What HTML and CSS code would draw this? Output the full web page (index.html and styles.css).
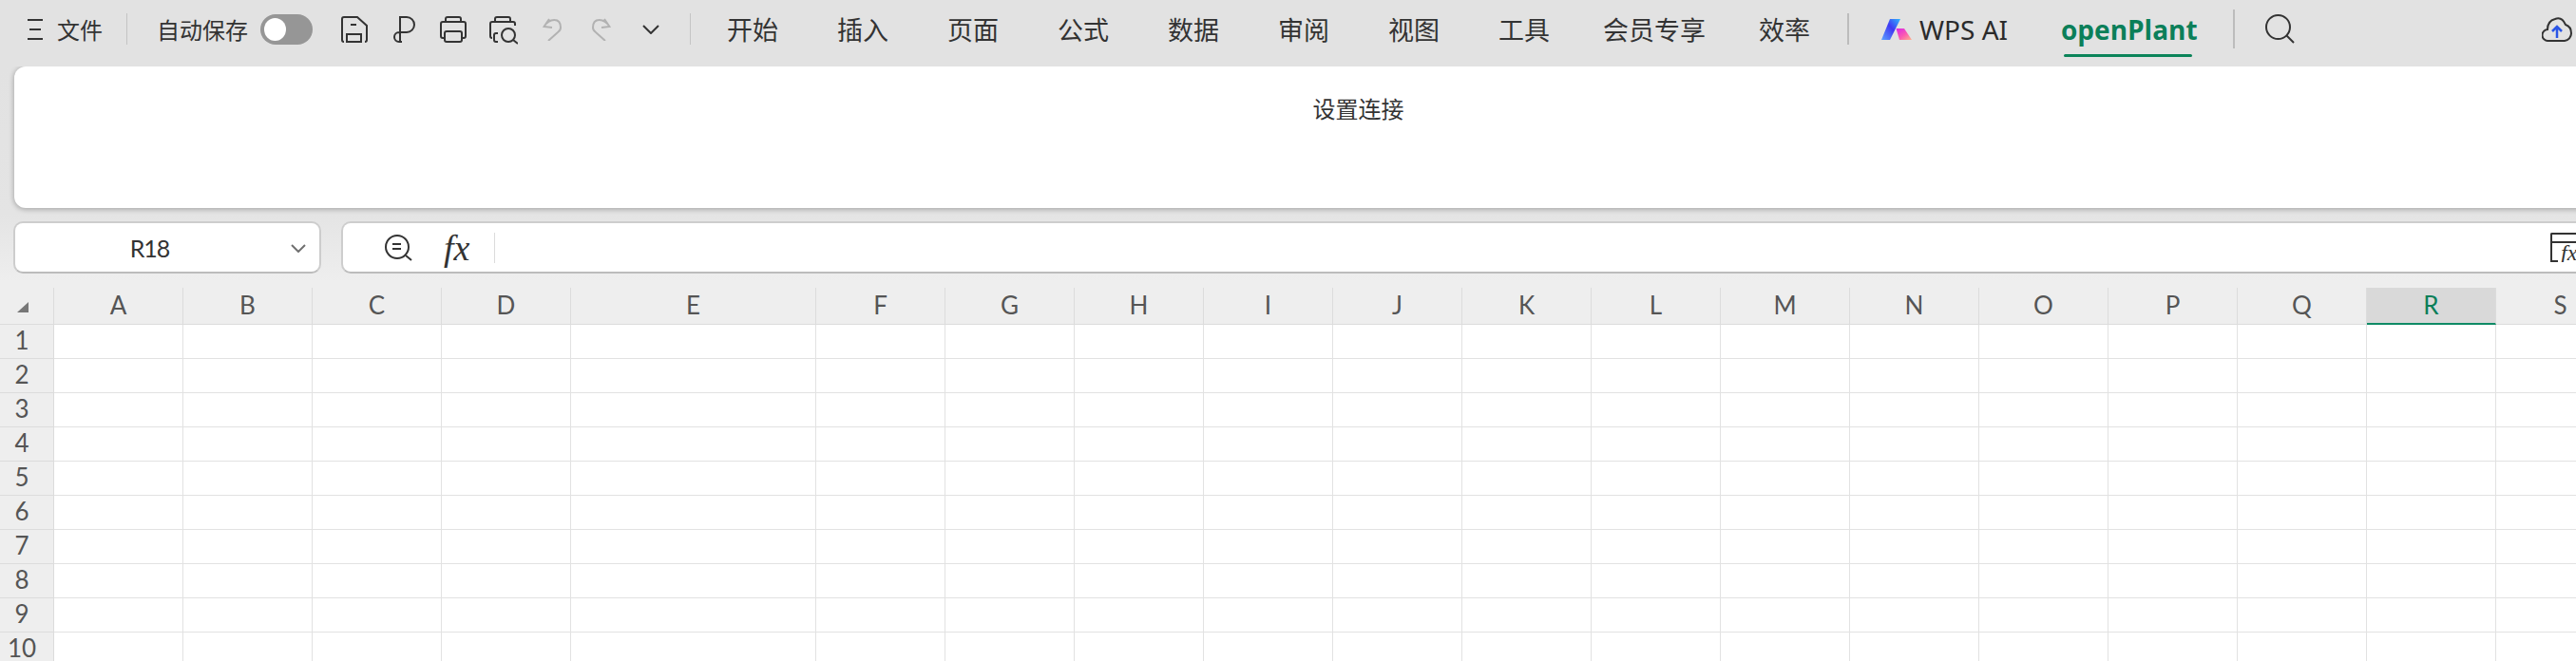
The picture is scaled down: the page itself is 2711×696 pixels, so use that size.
FILE: index.html
```html
<!DOCTYPE html>
<html lang="zh-CN">
<head>
<meta charset="utf-8">
<title>openPlant</title>
<link rel="stylesheet" href="styles.css">
</head>
<body>
<div class="app">
  <header class="menubar">
    <svg class="icon hamburger" width="18" height="22" viewBox="0 0 18 22"><path d="M1 1H17M3 11H15M1 21H17"/></svg>
    <span class="menu-text file-label">文件</span>
    <span class="divider divider-file"></span>
    <span class="menu-text autosave">自动保存</span>
    <span class="toggle"><span class="toggle-knob"></span></span>
    <svg class="icon qa-save" width="28" height="28" viewBox="0 0 28 28"><path d="M3 27Q1 27 1 25V3Q1 1 3 1H17L27 10V25Q27 27 25 27M10 9H16M6 27V19H21V27ZM6 27H21"/></svg>
    <svg class="icon qa-format" width="24" height="28" viewBox="0 0 24 28"><path d="M8 27V1H15A8 8 0 0 1 15 17H7A5 5 0 0 0 7 27H10"/></svg>
    <svg class="icon qa-print" width="28" height="28" viewBox="0 0 28 28"><path d="M6 6V3Q6 1 8 1H20Q22 1 22 3V6M5 23H3Q1 23 1 21V8Q1 6 3 6H25Q27 6 27 8V21Q27 23 25 23H23"/><rect x="5" y="16" width="18" height="11" rx="2"/></svg>
    <svg class="icon qa-preview" width="30" height="30" viewBox="0 0 30 30"><path d="M6 6V3Q6 1 8 1H20Q22 1 22 3V6M3 23Q1 23 1 21V8Q1 6 3 6H25Q27 6 27 8V10M9 18H7Q5 18 5 20V25Q5 27 7 27H9M25 25L30 29"/><circle cx="20" cy="20" r="7"/></svg>
    <svg class="icon icon-muted qa-undo" width="20" height="24" viewBox="0 0 20 24"><path d="M7 1L1.5 9L10 10M1.5 9C7 0 19 -1 19 10Q19 13 16 15L6 24"/></svg>
    <svg class="icon icon-muted qa-redo" width="20" height="24" viewBox="0 0 20 24"><path d="M13 1L18.5 9L10 10M18.5 9C13 0 1 -1 1 10Q1 13 4 15L14 24"/></svg>
    <svg class="icon qa-more" width="18" height="10" viewBox="0 0 18 10"><path d="M1 1L9 9L17 1"/></svg>
    <span class="divider divider-tabs"></span>
    <nav class="tabs">
      <span class="tab">开始</span>
      <span class="tab">插入</span>
      <span class="tab">页面</span>
      <span class="tab">公式</span>
      <span class="tab">数据</span>
      <span class="tab">审阅</span>
      <span class="tab">视图</span>
      <span class="tab">工具</span>
      <span class="tab tab-member">会员专享</span>
      <span class="tab tab-member">效率</span>
    </nav>
    <span class="divider divider-ai"></span>
    <svg class="ai-logo" width="32" height="22" viewBox="0 0 32 22">
      <defs>
        <linearGradient id="aiLeft" x1="1" y1="0" x2="0" y2="1"><stop offset="0" stop-color="#2fb8ff"/><stop offset=".45" stop-color="#4038f2"/><stop offset="1" stop-color="#5aa2ff"/></linearGradient>
        <linearGradient id="aiRight" x1="0" y1="0" x2="1" y2="1"><stop offset="0" stop-color="#d824ea"/><stop offset=".55" stop-color="#fb5cb0"/><stop offset="1" stop-color="#ffb58c"/></linearGradient>
      </defs>
      <polygon points="9,0 20,0 9,22 0,22" fill="url(#aiLeft)"/>
      <polygon points="15.500,10 24,10 32,22 19,22" fill="url(#aiRight)"/>
    </svg>
    <span class="ai-label">WPS AI</span>
    <span class="plant-tab">openPlant</span>
    <span class="divider divider-search"></span>
    <svg class="icon search" width="31" height="31" viewBox="0 0 31 31"><circle cx="13.500" cy="13.500" r="12.500"/><path d="M22.500 22.500L30 30"/></svg>
    <svg class="icon cloud" width="32" height="27" viewBox="0 0 32 27"><path d="M8 26H7A6 6 0 0 1 6 14Q6 5 14 3Q21 0 25 9Q31 11 31 18A8 8 0 0 1 24 26Z"/><path class="cloud-arrow" d="M16 23V11M11 16L16 11L21 16"/></svg>
  </header>

  <section class="ribbon"><span class="ribbon-text">设置连接</span></section>

  <section class="formula-row">
    <div class="name-box">
      <span class="name-value">R18</span>
      <svg class="name-caret" width="16" height="9" viewBox="0 0 16 9"><path d="M1 1L8 8L15 1"/></svg>
    </div>
    <div class="formula-box">
      <svg class="icon formula-zoom" width="29" height="28" viewBox="0 0 29 28"><circle cx="13" cy="13" r="12"/><path d="M8 10H17M8 15H17M22 22L28 27"/></svg>
      <span class="fx">fx</span>
      <span class="formula-sep"></span>
      <span class="formula-input"></span>
      <span class="fx-panel"><span class="fx-small">fx</span></span>
    </div>
  </section>

  <section class="sheet">
    <div class="gutter">
      <div class="corner"><span class="corner-mark"></span></div>
      <div class="row-num">1</div>
      <div class="row-num">2</div>
      <div class="row-num">3</div>
      <div class="row-num">4</div>
      <div class="row-num">5</div>
      <div class="row-num">6</div>
      <div class="row-num">7</div>
      <div class="row-num">8</div>
      <div class="row-num">9</div>
      <div class="row-num">10</div>
    </div>
    <div class="col"><div class="col-head">A</div><div class="col-body"></div></div>
    <div class="col"><div class="col-head">B</div><div class="col-body"></div></div>
    <div class="col"><div class="col-head">C</div><div class="col-body"></div></div>
    <div class="col"><div class="col-head">D</div><div class="col-body"></div></div>
    <div class="col col-wide"><div class="col-head">E</div><div class="col-body"></div></div>
    <div class="col"><div class="col-head">F</div><div class="col-body"></div></div>
    <div class="col"><div class="col-head">G</div><div class="col-body"></div></div>
    <div class="col"><div class="col-head">H</div><div class="col-body"></div></div>
    <div class="col"><div class="col-head">I</div><div class="col-body"></div></div>
    <div class="col"><div class="col-head">J</div><div class="col-body"></div></div>
    <div class="col"><div class="col-head">K</div><div class="col-body"></div></div>
    <div class="col"><div class="col-head">L</div><div class="col-body"></div></div>
    <div class="col"><div class="col-head">M</div><div class="col-body"></div></div>
    <div class="col"><div class="col-head">N</div><div class="col-body"></div></div>
    <div class="col"><div class="col-head">O</div><div class="col-body"></div></div>
    <div class="col"><div class="col-head">P</div><div class="col-body"></div></div>
    <div class="col"><div class="col-head">Q</div><div class="col-body"></div></div>
    <div class="col col-active"><div class="col-head">R</div><div class="col-body"></div></div>
    <div class="col"><div class="col-head">S</div><div class="col-body"></div></div>
  </section>
</div>
</body>
</html>
```
FILE: styles.css
```css
* { box-sizing: border-box; }
html, body { margin: 0; padding: 0; height: 100%; overflow: hidden; background: #fff; }
body { font-family: "Noto Sans CJK SC", "Noto Sans", sans-serif; color: #333; }

.app {
  width: 2711px;
  height: 696px;
  overflow: hidden;
  background: linear-gradient(#e2e2e2 0, #e2e2e2 70px, #e4e4e4 225px, #eeeeee 296px);
}

/* top bar */
.menubar {
  position: relative;
  display: flex;
  align-items: center;
  height: 70px;
  padding: 0 4px 9px 28px;
  background: #e2e2e2;
}
.icon { flex: none; fill: none; stroke: #333; stroke-width: 2; }
.icon-muted { stroke: #b2b2b2; }
.menu-text { font-size: 24px; line-height: 34px; white-space: nowrap; }
.file-label { margin-left: 14px; }
.divider { flex: none; width: 1px; height: 33px; background: #c4c4c4; }
.divider-file { margin-left: 25px; }
.autosave { margin-left: 31px; }
.toggle {
  flex: none;
  display: flex;
  align-items: center;
  width: 55px;
  height: 32px;
  margin-left: 13px;
  padding-left: 4px;
  border-radius: 16px;
  background: #969696;
}
.toggle-knob { width: 23px; height: 24px; border-radius: 50%; background: #fff; }
.qa-save { margin-left: 30px; }
.qa-format { margin-left: 26px; }
.qa-print { margin-left: 26px; }
.qa-preview { margin-left: 24px; margin-top: 2px; }
.qa-undo { margin-left: 26px; }
.qa-redo { margin-left: 32px; }
.qa-more { margin-left: 33px; }
.divider-tabs { margin-left: 32px; }
.tabs { display: flex; gap: 62px; margin-left: 38px; }
.tab { font-size: 27px; line-height: 38px; white-space: nowrap; }
.tab-member { margin-left: -6px; }
.divider-ai { width: 2px; margin-left: 39px; background: #bcbcbc; }
.ai-logo { flex: none; margin-left: 34px; }
.ai-label { margin-left: 8px; font-family: "Noto Sans", sans-serif; font-size: 28px; line-height: 38px; color: #2b2b2b; }
.plant-tab {
  position: relative;
  margin-left: 56px;
  font-family: "Open Sans", sans-serif;
  font-size: 28px;
  font-weight: 700;
  line-height: 38px;
  color: #0b7f59;
}
.plant-tab::after {
  content: "";
  position: absolute;
  left: 3px;
  right: 6px;
  top: 45px;
  height: 3px;
  border-radius: 2px;
  background: #0b8459;
}
.divider-search { width: 2px; height: 41px; margin-left: 37px; background: #bcbcbc; }
.search { margin-left: 32px; }
.cloud { margin-left: auto; }
.cloud-arrow { stroke: #2a55e6; stroke-width: 2.500; }

/* ribbon card */
.ribbon {
  display: flex;
  justify-content: center;
  width: 2829px;
  height: 149px;
  margin-left: 15px;
  padding-top: 26px;
  border-radius: 12px;
  background: #fff;
  box-shadow: 0 1px 5px 1px rgba(0, 0, 0, .24);
}
.ribbon-text { font-size: 24px; line-height: 36px; }

/* name box and formula bar */
.formula-row { display: flex; gap: 21px; width: 2900px; margin-top: 14px; padding-left: 14px; }
.name-box, .formula-box {
  display: flex;
  align-items: center;
  height: 55px;
  border: 2px solid #cdcdcd;
  border-bottom: 2px solid #bcbcbc;
  border-radius: 10px;
  background: #fff;
}
.name-box { position: relative; justify-content: center; width: 324px; padding-right: 37px; }
.name-value { font-family: Lato, sans-serif; font-size: 25px; letter-spacing: -1px; color: #333; }
.name-caret { position: absolute; right: 14px; top: 22px; fill: none; stroke: #707070; stroke-width: 2; }
.formula-box { width: 2480px; padding-left: 44px; flex: none; }
.fx { margin-left: 33px; font-family: "Liberation Serif", serif; font-size: 38px; font-style: italic; line-height: 40px; color: #333; }
.formula-sep { width: 1px; height: 32px; margin-left: 26px; background: #dcdcdc; }
.formula-input { flex: 1; }
.fx-panel {
  position: relative;
  width: 40px;
  height: 31px;
  margin-right: 113px;
  border-left: 2px solid #333;
  border-top: 2px solid #333;
  border-radius: 2px 0 0 0;
  overflow: hidden;
}
.fx-panel::before {
  content: "";
  position: absolute;
  left: 0;
  right: 0;
  top: 7px;
  height: 2px;
  background: #333;
}
.fx-panel::after {
  content: "";
  position: absolute;
  left: 0;
  bottom: 0;
  width: 6px;
  height: 2px;
  background: #333;
}
.fx-small { position: absolute; left: 9px; top: 4px; font-family: "Liberation Serif", serif; font-size: 24px; font-style: italic; line-height: 30px; }

/* grid */
.sheet { display: flex; width: 2800px; margin-top: 15px; }
.gutter { flex: none; width: 57px; border-right: 1px solid #dcdcdc; background: #eeeeee; }
.corner { position: relative; height: 39px; border-bottom: 1px solid #dcdcdc; }
.corner-mark {
  position: absolute;
  left: 18px;
  top: 15px;
  width: 12px;
  height: 11px;
  background: #777;
  clip-path: polygon(100% 0, 100% 100%, 0 100%);
}
.row-num {
  height: 36px;
  padding-right: 10px;
  border-bottom: 1px solid #dcdcdc;
  font-family: Lato, sans-serif;
  font-size: 26px;
  line-height: 33px;
  text-align: center;
  color: #555;
}
.col { flex: none; width: 136px; }
.col-wide { width: 258px; }
.col-head {
  height: 39px;
  border-right: 1px solid #dcdcdc;
  border-bottom: 1px solid #dcdcdc;
  background: #eeeeee;
  font-family: Lato, sans-serif;
  font-size: 26px;
  line-height: 37px;
  text-align: center;
  color: #555;
}
.col-body {
  height: 360px;
  border-right: 1px solid #e2e2e2;
  background: repeating-linear-gradient(#fff 0, #fff 35px, #e2e2e2 35px, #e2e2e2 36px);
}
.col-active .col-head {
  background: #d9d9d9;
  border-bottom: 2px solid #0f8a65;
  color: #0b7f59;
}
```
